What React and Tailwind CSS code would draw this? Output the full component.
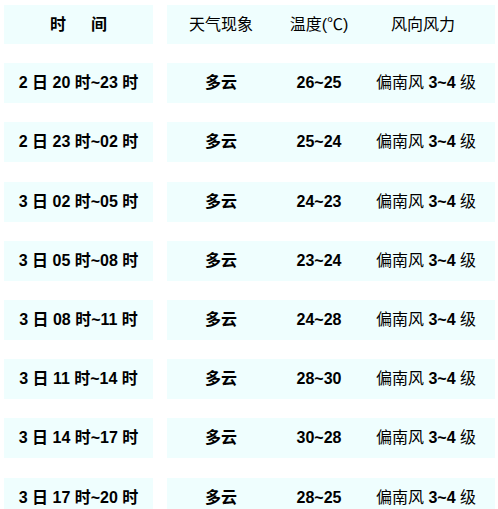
import React from "react";

const rows = [
  ["2 日 20 时~23 时", "26~25"],
  ["2 日 23 时~02 时", "25~24"],
  ["3 日 02 时~05 时", "24~23"],
  ["3 日 05 时~08 时", "23~24"],
  ["3 日 08 时~11 时", "24~28"],
  ["3 日 11 时~14 时", "28~30"],
  ["3 日 14 时~17 时", "30~28"],
  ["3 日 17 时~20 时", "28~25"],
];

const font = { fontFamily: '"Liberation Sans", "Noto Sans CJK SC", sans-serif' };

export default function App() {
  return (
    <div className="w-[498px] h-[509px] overflow-hidden bg-white pl-[4px] pr-[3px] pt-[5px] text-[16px] text-black" style={font}>
      <div className="flex flex-col gap-[19.2px]">
        <div className="flex h-[39px] gap-[14px]">
          <div className="w-[149px] bg-[#effefe] flex items-center justify-center font-bold">
            <span>时</span>
            <span className="ml-[25px]">间</span>
          </div>
          <div className="flex-1 bg-[#effefe] flex items-center">
            <div className="w-[108px] text-center">天气现象</div>
            <div className="w-[88px] text-center">温度(℃)</div>
            <div className="flex-1 text-center pr-[12px]">风向风力</div>
          </div>
        </div>
        {rows.map(([t, temp], i) => (
          <div key={i} className="flex h-[40px] gap-[14px] shrink-0">
            <div className="w-[149px] bg-[#effefe] flex items-center justify-center font-bold">{t}</div>
            <div className="flex-1 bg-[#effefe] flex items-center">
              <div className="w-[108px] text-center font-bold">多云</div>
              <div className="w-[88px] text-center font-bold">{temp}</div>
              <div className="flex-1 text-center pr-[6px]">偏南风 <span className="font-bold">3~4</span> 级</div>
            </div>
          </div>
        ))}
      </div>
    </div>
  );
}
